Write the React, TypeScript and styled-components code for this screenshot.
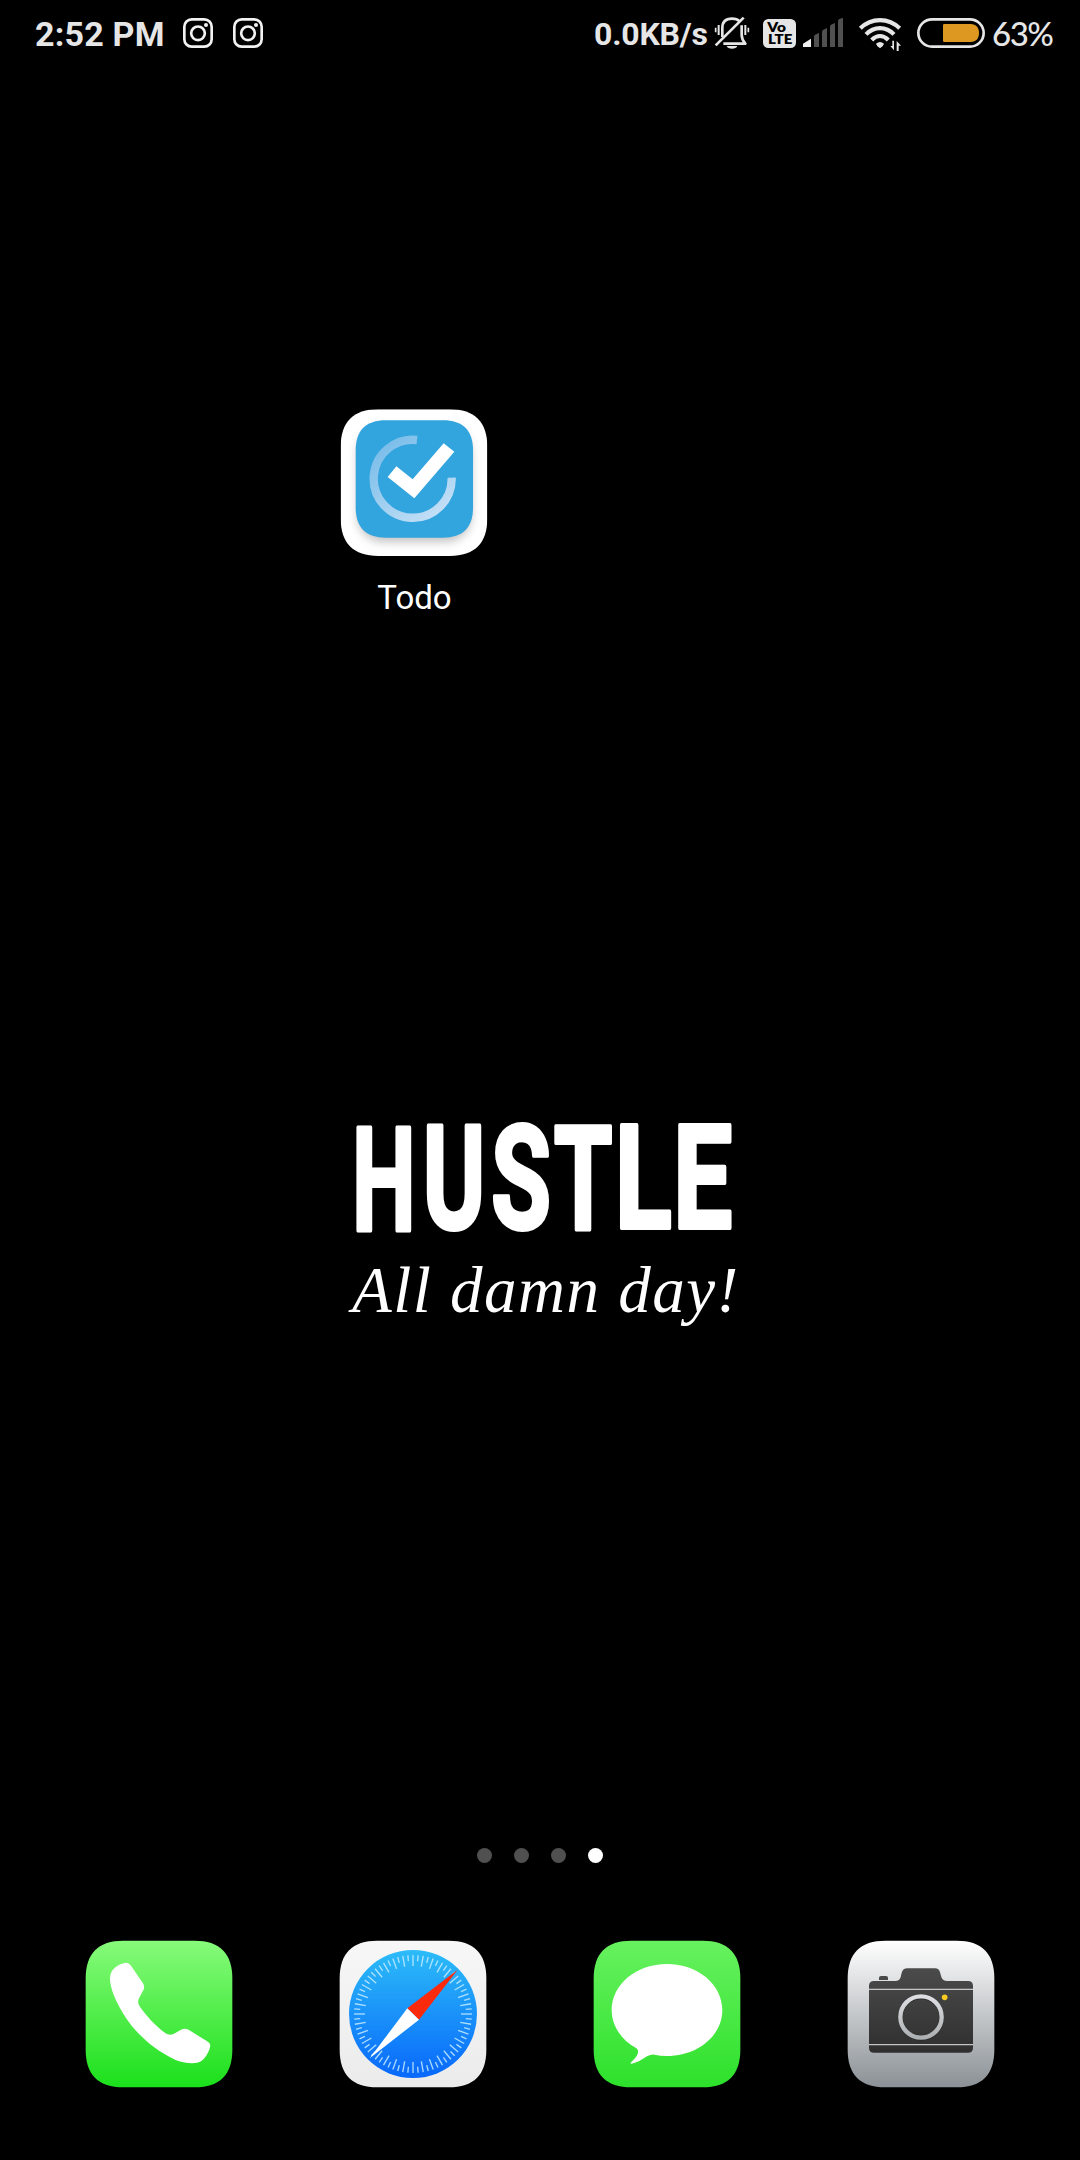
import React from "react";
import styled, { createGlobalStyle } from "styled-components";

const GlobalStyle = createGlobalStyle`
  * { box-sizing: border-box; }
  html, body { margin: 0; background: #000; }
  svg { display: block; flex: none; }
`;

const Screen = styled.main`
  width: 1080px;
  height: 2160px;
  display: flex;
  flex-direction: column;
  overflow: hidden;
  background: #000;
  color: #fff;
  font-family: Roboto, "Liberation Sans", sans-serif;
`;

const StatusBar = styled.header`
  height: 66px;
  flex: none;
  display: flex;
  align-items: center;
  justify-content: space-between;
  padding: 0 20px 0 35px;
  color: #e6e6e6;
`;

const StatusGroup = styled.div`
  display: flex;
  align-items: center;
`;

const StatusText = styled.span<{ $width: number; $size: number; $spacing?: number }>`
  width: ${(p) => p.$width}px;
  font-size: ${(p) => p.$size}px;
  font-weight: 700;
  letter-spacing: ${(p) => p.$spacing ?? 0}px;
  line-height: 40px;
  white-space: nowrap;
  padding-top: 2px;
`;

const BatteryLevel = styled.span`
  width: 68px;
  margin-left: 6px;
  padding-bottom: 1px;
  font-family: Lato, sans-serif;
  font-weight: 500;
  font-size: 33px;
  line-height: 40px;
  letter-spacing: -1.5px;
  white-space: nowrap;
`;

const Glyph = styled.svg<{ $gap?: number }>`
  margin-left: ${(p) => p.$gap ?? 0}px;
`;

const AppGrid = styled.section`
  height: 1024px;
  flex: none;
  display: grid;
  grid-template-columns: repeat(4, 254px);
  align-content: start;
  padding: 327px 0 0 33px;
`;

const AppCell = styled.div<{ $column: number }>`
  grid-column: ${(p) => p.$column};
  display: flex;
  flex-direction: column;
  align-items: center;
`;

const AppLabel = styled.span`
  font-size: 33px;
  line-height: 40px;
  margin-top: 5px;
  margin-left: 1px;
`;

const Quote = styled.section`
  height: 740px;
  flex: none;
  display: flex;
  flex-direction: column;
  padding-left: 340px;
`;

const Lettering = styled.text`
  font-family: Roboto, sans-serif;
  font-weight: 700;
  font-size: 435px;
  fill: #fff;
  stroke: #fff;
  stroke-width: 12px;
  stroke-linejoin: round;
`;

const SubLine = styled.p`
  margin: -11px 0 0 12px;
  font-family: "Liberation Serif", serif;
  font-style: italic;
  font-size: 65px;
  line-height: 70px;
  letter-spacing: 1.5px;
  white-space: nowrap;
`;

const Pager = styled.nav`
  height: 50px;
  flex: none;
  display: flex;
  justify-content: center;
  align-items: center;
  gap: 22px;
`;

const Dot = styled.i<{ $active?: boolean }>`
  width: 15px;
  height: 15px;
  border-radius: 50%;
  background: ${(p) => (p.$active ? "#fff" : "#505050")};
`;

const Dock = styled.footer`
  display: grid;
  grid-template-columns: repeat(4, 254px);
  justify-items: center;
  padding: 45px 0 0 33px;
`;

const BadgeText = styled.text`
  font-family: Lato, sans-serif;
  font-weight: 800;
  font-size: 37px;
  fill: #000;
`;

const SQUIRCLE =
  "M47 160C47 85 85 47 160 47H374C449 47 487 85 487 160V374C487 449 449 487 374 487H160C85 487 47 449 47 374Z";

function Gradient({ id, from, to }: { id: string; from: string; to: string }) {
  return (
    <linearGradient id={id} x1="0" y1="0" x2="0" y2="1">
      <stop offset="0" stopColor={from} />
      <stop offset="1" stopColor={to} />
    </linearGradient>
  );
}

function Instagram({ gap }: { gap: number }) {
  return (
    <Glyph $gap={gap} width="30" height="30" viewBox="0 0 90 90" fill="none" stroke="#f2f2f2">
      <rect x="4" y="4" width="82" height="82" rx="22" strokeWidth="8" />
      <circle cx="45" cy="46" r="20.5" strokeWidth="8" />
      <circle cx="69" cy="21" r="6" fill="#f2f2f2" stroke="none" />
    </Glyph>
  );
}

function MutedBell() {
  return (
    <svg width="36" height="36" viewBox="402 45 108 108" fill="none" stroke="#e6e6e6" strokeWidth="8">
      <path d="M427 111V84C427 65 438 56 456 56C466 56 474 59 479 64" />
      <path d="M485 76V105C485 117 490 124 496 131H430" strokeLinejoin="round" />
      <path d="M407 136L491 53" />
      <path d="M440 138H472C469 149 443 149 440 138Z" fill="#e6e6e6" stroke="none" />
      <path d="M416 75V105M496 75V105" strokeWidth="6" />
      <path d="M407 83V97M505 83V97" strokeWidth="5" />
    </svg>
  );
}

function VoLte() {
  return (
    <Glyph $gap={12} width="35" height="36" viewBox="546 45 105 108">
      <rect x="549" y="57" width="99" height="87" rx="16" fill="#e6e6e6" />
      <BadgeText x="562" y="95" textLength="56" lengthAdjust="spacingAndGlyphs">Vo</BadgeText>
      <BadgeText x="564" y="131" textLength="73" lengthAdjust="spacingAndGlyphs">LTE</BadgeText>
    </Glyph>
  );
}

function Signal() {
  return (
    <Glyph $gap={5} width="42" height="36" viewBox="666 45 126 108">
      <path d="M669 141V131L693 116V141Z" fill="#f0f0f0" />
      <path
        d="M702 141V109Q702 106 705 104L717 99V141ZM726 141V96Q726 92 729 90L741 84V141ZM750 141V80Q750 76 753 74L765 69V141ZM774 141V64Q774 60 777 58L789 53V141Z"
        fill="#505050"
      />
    </Glyph>
  );
}

function Wifi() {
  return (
    <Glyph $gap={14} width="44" height="36" viewBox="114 45 132 108" fill="none" stroke="#e6e6e6" strokeWidth="12.5">
      <path d="M121 85C154 52 206 52 239 85" />
      <path d="M138 103C162 78 198 78 222 103" />
      <path d="M155 120C171 104 189 104 205 120" />
      <path d="M168 131Q180 121 192 131Q190 139 180 145Q170 139 168 131Z" fill="#e6e6e6" stroke="none" />
      <path d="M222 122V151L211 138H217V122ZM230 153V123L243 137H236V153Z" fill="#e6e6e6" stroke="none" />
    </Glyph>
  );
}

function Battery() {
  return (
    <Glyph $gap={14} width="70" height="36" viewBox="288 45 210 108">
      <rect x="295" y="58" width="196" height="82" rx="41" fill="none" stroke="#e6e6e6" strokeWidth="8" />
      <path d="M373 72H452C468 72 477 83 477 99S468 126 452 126H373Q369 126 369 122V76Q369 72 373 72Z" fill="#dc9820" />
    </Glyph>
  );
}

function TodoIcon() {
  return (
    <svg width="190" height="180" viewBox="-3 9 570 540">
      <defs>
        <filter id="todoShadow" x="-30%" y="-30%" width="160%" height="160%">
          <feGaussianBlur stdDeviation="15" />
        </filter>
        <clipPath id="todoClip"><path d={SQUIRCLE} transform="translate(15 11)" /></clipPath>
        <linearGradient id="todoRing" gradientUnits="userSpaceOnUse" x1="190" y1="150" x2="360" y2="370">
          <stop offset="0" stopColor="#77bce9" />
          <stop offset="1" stopColor="#c3dff6" />
        </linearGradient>
      </defs>
      <g clipPath="url(#todoClip)">
        <rect x="60" y="56" width="445" height="445" fill="#fff" />
        <rect x="112" y="114" width="342" height="342" rx="76" fill="#7a7a7a" opacity="0.45" filter="url(#todoShadow)" />
      </g>
      <path d={SQUIRCLE} transform="translate(69.500 53.300) scale(.8)" fill="#32a4de" />
      <path d="M291 150A117 117 0 1 0 395 263" fill="none" stroke="url(#todoRing)" strokeWidth="25" />
      <path d="M203 261L229 229L278 268L371 160L403 185L283 325Z" fill="#fff" />
    </svg>
  );
}

function PhoneIcon() {
  return (
    <svg width="180" height="180" viewBox="0 0 540 540">
      <defs><Gradient id="phoneBg" from="#87fa7a" to="#1be01b" /></defs>
      <path d={SQUIRCLE} fill="url(#phoneBg)" />
      <path
        d="M128 135C140 121 156 114 169 113Q177 113 182 121L219 175Q226 187 219 197L207 220Q201 233 209 244C229 273 256 303 287 325Q296 332 309 328L333 314Q346 308 357 315L415 351Q423 357 420 367C416 384 404 402 393 409C378 419 340 415 315 404C255 376 201 329 168 279C138 233 121 192 120 162Q119 145 128 135Z"
        fill="#fff"
      />
    </svg>
  );
}

function CompassIcon() {
  const ticks = Array.from({ length: 72 }, (_, i) => i);
  return (
    <svg width="180" height="180" viewBox="-3 0 540 540">
      <defs>
        <Gradient id="compassBg" from="#f7f7f7" to="#ebebeb" />
        <Gradient id="compassFace" from="#2cbcf8" to="#0868fb" />
      </defs>
      <path d={SQUIRCLE} transform="translate(-3 0)" fill="url(#compassBg)" />
      <circle cx="264" cy="267" r="192" fill="url(#compassFace)" />
      <g stroke="#c5ecff" strokeWidth="4" opacity="0.85">
        {ticks.map((i) => (
          <path key={i} d={i % 2 ? "M264 90V108" : "M264 90V123"} transform={`rotate(${i * 5} 264 267)`} />
        ))}
      </g>
      <path d="M398 134L247 250L282 284Z" fill="#fc2a0c" />
      <path d="M134 400L247 250L282 284Z" fill="#fff" />
    </svg>
  );
}

function MessagesIcon() {
  return (
    <svg width="180" height="180" viewBox="0 0 540 540">
      <defs><Gradient id="msgBg" from="#67f15f" to="#2de12b" /></defs>
      <path d={SQUIRCLE} fill="url(#msgBg)" />
      <path
        d="M267 117C359 117 433 178 433 255S359 393 267 393Q247 393 229 389Q218 388 207 394C190 405 178 413 161 416Q155 416 160 411C169 402 178 393 180 383Q182 374 174 369C130 345 101 302 101 255C101 178 175 117 267 117Z"
        fill="#fff"
      />
    </svg>
  );
}

function CameraIcon() {
  return (
    <svg width="180" height="180" viewBox="0 0 540 540">
      <defs>
        <Gradient id="camBg" from="#ffffff" to="#8b9196" />
        <Gradient id="camBody" from="#4b4b4b" to="#2f2f2f" />
        <Gradient id="camRing" from="#dedfe2" to="#adb0b3" />
      </defs>
      <path d={SQUIRCLE} fill="url(#camBg)" />
      <path d="M141 165V159Q141 153 147 153H162Q168 153 168 159V165Z" fill="#494949" />
      <path
        d="M111 183Q111 168 126 168H190Q203 168 206 156L209 143Q213 130 226 130H309Q321 130 324 142L328 156Q332 168 345 168H408Q423 168 423 183V368Q423 383 408 383H126Q111 383 111 368Z"
        fill="url(#camBody)"
      />
      <path d="M111 193H423M111 359H423" stroke="#c3c5c6" strokeWidth="4" />
      <circle cx="267" cy="277" r="62" fill="none" stroke="#252525" strokeWidth="15" />
      <circle cx="267" cy="276" r="62" fill="none" stroke="url(#camRing)" strokeWidth="13" />
      <circle cx="338" cy="217" r="8.500" fill="#fccb22" />
    </svg>
  );
}

const LETTERS = [
  { char: "H", x: 36, y: 363, stretch: 0.622 },
  { char: "U", x: 248, y: 357, stretch: 0.654 },
  { char: "S", x: 453, y: 356, stretch: 0.674 },
  { char: "T", x: 641, y: 357, stretch: 0.654 },
  { char: "L", x: 824, y: 354, stretch: 0.728 },
  { char: "E", x: 999, y: 353, stretch: 0.728 },
];

export default function App() {
  return (
    <Screen>
      <GlobalStyle />
      <StatusBar>
        <StatusGroup>
          <StatusText $width={148} $size={34} $spacing={0.2}>2:52 PM</StatusText>
          <Instagram gap={0} />
          <Instagram gap={20} />
        </StatusGroup>
        <StatusGroup>
          <StatusText $width={120} $size={32} $spacing={-0.2}>0.0KB/s</StatusText>
          <MutedBell />
          <VoLte />
          <Signal />
          <Wifi />
          <Battery />
          <BatteryLevel>63%</BatteryLevel>
        </StatusGroup>
      </StatusBar>
      <AppGrid>
        <AppCell $column={2}>
          <TodoIcon />
          <AppLabel>Todo</AppLabel>
        </AppCell>
      </AppGrid>
      <Quote>
        <svg width="410" height="176" viewBox="0 -60 1230 528">
          {LETTERS.map((l) => (
            <Lettering key={l.char} transform={`translate(${l.x} ${l.y}) scale(${l.stretch} 1)`}>
              {l.char}
            </Lettering>
          ))}
        </svg>
        <SubLine>All damn day!</SubLine>
      </Quote>
      <Pager>
        <Dot />
        <Dot />
        <Dot />
        <Dot $active />
      </Pager>
      <Dock>
        <PhoneIcon />
        <CompassIcon />
        <MessagesIcon />
        <CameraIcon />
      </Dock>
    </Screen>
  );
}
